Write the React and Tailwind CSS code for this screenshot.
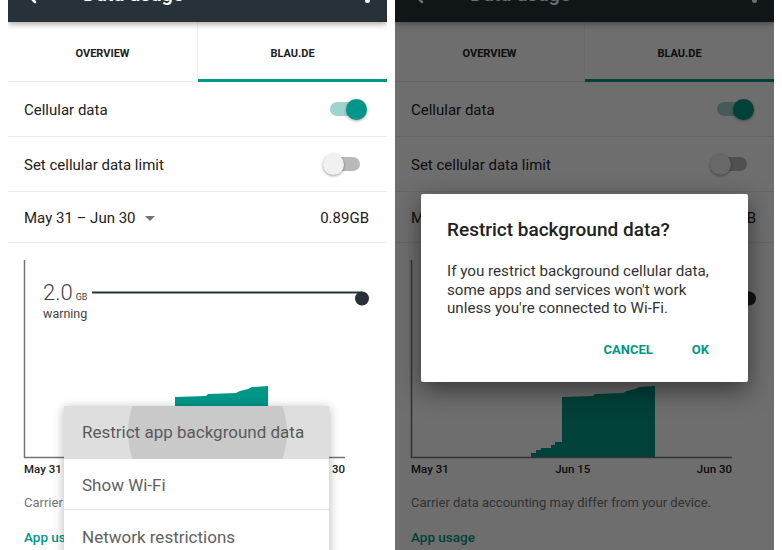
import { ArrowLeft } from "lucide-react";

const Toggle = ({ on }) => (
  <div className="relative w-[37px] h-[21px]">
    {on ? (
      <>
        <div className="absolute left-0 top-[3.5px] w-[32px] h-[14px] rounded-full bg-[#9fd4cd]" />
        <div className="absolute right-0 top-0 w-[21px] h-[21px] rounded-full bg-[#009688] shadow-[0_1px_3px_rgba(0,0,0,0.35)]" />
      </>
    ) : (
      <>
        <div className="absolute right-0 top-[3.5px] w-[32px] h-[14px] rounded-full bg-[#b9b9b9]" />
        <div className="absolute left-0 top-0 w-[21px] h-[21px] rounded-full bg-[#f1f1f1] shadow-[0_1px_3px_rgba(0,0,0,0.4)]" />
      </>
    )}
  </div>
);

const Chart = () => (
  <div className="relative h-[216px]">
    <svg width="379" height="216" className="block">
      {/* usage area */}
      <polygon
        fill="#009688"
        points="136,214 136,210 141,210 141,207 146,207 146,205 156,205 156,202 160,202 160,199 167,199 167,154 198,153 200,151 228,150 232,148 240,146 244,144 260,143 260,214"
      />
      {/* axes */}
      <line x1="16.5" y1="17" x2="16.5" y2="215" stroke="#757575" strokeWidth="1.5" />
      <line x1="16" y1="214.5" x2="337" y2="214.5" stroke="#757575" strokeWidth="1.5" />
      {/* warning line */}
      <line x1="84" y1="49.5" x2="354" y2="49.5" stroke="#263238" strokeWidth="2.2" />
      <circle cx="354" cy="55.5" r="7" fill="#263238" />
    </svg>
    <div className="absolute left-[35px] top-[37px] text-[#424242]">
      <div className="flex items-baseline gap-[3px]">
        <span className="text-[22px] font-light leading-[26px]">2.0</span>
        <span className="text-[9px] leading-[10px]">GB</span>
      </div>
      <div className="text-[12.5px] leading-[15px]">warning</div>
    </div>
  </div>
);

const Screen = ({ children }) => (
  <div className="relative w-[379px] h-[550px] shrink-0 overflow-hidden bg-white">
    {/* toolbar, mostly cut off at the top */}
    <div className="relative z-10 h-[22px] bg-[#263238] shadow-[0_2px_6px_rgba(0,0,0,0.35)] overflow-hidden flex items-start text-white">
      <ArrowLeft size={24} strokeWidth={2.5} className="ml-[15px] -mt-[17px] shrink-0" />
      <div className="ml-[36px] -mt-[16px] text-[20px] leading-[20px] font-medium">Data usage</div>
      <div className="ml-auto mr-[17px] -mt-[2px] w-[5px] h-[5px] rounded-full bg-white" />
    </div>

    {/* tabs */}
    <div className="flex h-[60px] border-b border-[#ebebeb]">
      <div className="flex-1 flex items-center justify-center border-r border-[#f0f0f0] pt-[6px] text-[11px] font-bold text-[#212121]">
        OVERVIEW
      </div>
      <div className="flex-1 flex items-center justify-center border-b-[3px] border-[#009688] -mb-px pt-[8px] text-[11px] font-bold text-[#212121]">
        BLAU.DE
      </div>
    </div>

    <div className="h-[55px] border-b border-[#ececec] flex items-center justify-between pl-4 pr-[20px]">
      <span className="pt-[3px] text-[15px] text-[#212121]">Cellular data</span>
      <Toggle on />
    </div>
    <div className="h-[55px] border-b border-[#ececec] flex items-center justify-between pl-4 pr-[27px]">
      <span className="pt-[3px] text-[15px] text-[#212121]">Set cellular data limit</span>
      <Toggle />
    </div>
    <div className="h-[51px] border-b border-[#ececec] flex items-center pl-4 pr-[18px]">
      <span className="pt-[2px] text-[15px] text-[#212121]">May 31 – Jun 30</span>
      <span className="ml-[9px] mt-[2px] w-0 h-0 border-l-[5px] border-r-[5px] border-t-[5px] border-l-transparent border-r-transparent border-t-[#757575]" />
      <span className="ml-auto pt-[2px] text-[15px] text-[#212121]">0.89GB</span>
    </div>

    <Chart />

    <div className="mt-[3px] ml-4 w-[321px] flex justify-between text-[11.5px] leading-[14px] font-medium text-[#212121]">
      <span>May 31</span>
      <span>Jun 15</span>
      <span>Jun 30</span>
    </div>
    <div className="mt-[19px] pl-4 text-[13px] leading-[16px] text-[#757575]">
      Carrier data accounting may differ from your device.
    </div>
    <div className="mt-[18px] pl-4 text-[13.5px] leading-[16px] font-medium text-[#009688]">App usage</div>

    {children}
  </div>
);

export default function App() {
  return (
    <div className="w-[782px] h-[550px] overflow-hidden bg-white flex gap-2 px-2 font-[Roboto,sans-serif]">
      <Screen>
        {/* overflow menu */}
        <div className="absolute z-20 left-[56px] top-[406px] w-[265px] bg-white shadow-[0_2px_10px_rgba(0,0,0,0.3)]">
          <div className="relative h-[53px] bg-[#dedede] overflow-hidden flex items-center pl-[18px]">
            <div className="absolute left-[64px] -top-[53px] w-[159px] h-[159px] rounded-full bg-[#c9c9c9]" />
            <span className="relative pt-[1px] text-[17px] text-[#5a5a5a]">Restrict app background data</span>
          </div>
          <div className="h-[51px] border-b border-[#e4e4e4] flex items-center pl-[18px] pt-[3px] text-[17px] text-[#616161]">
            Show Wi-Fi
          </div>
          <div className="h-[54px] flex items-center pl-[18px] pt-[1px] text-[17px] text-[#616161]">
            Network restrictions
          </div>
        </div>
      </Screen>

      <Screen>
        <div className="absolute inset-0 z-20 bg-black/[0.57]" />
        <div className="absolute z-30 left-[26px] top-[194px] w-[327px] h-[188px] bg-white rounded-[2px] shadow-[0_8px_24px_rgba(0,0,0,0.5)] pl-[26px] pt-[24px]">
          <div className="text-[19px] leading-[24px] font-medium text-[#212121]">Restrict background data?</div>
          <div className="mt-[20px] text-[15.2px] leading-[18.5px] text-[#333333]">
            If you restrict background cellular data,
            <br />
            some apps and services won't work
            <br />
            unless you're connected to Wi-Fi.
          </div>
          <div className="mt-[24px] flex justify-end gap-[39px] pr-[39px] text-[13px] leading-[16px] font-bold text-[#009688]">
            <span>CANCEL</span>
            <span>OK</span>
          </div>
        </div>
      </Screen>
    </div>
  );
}
